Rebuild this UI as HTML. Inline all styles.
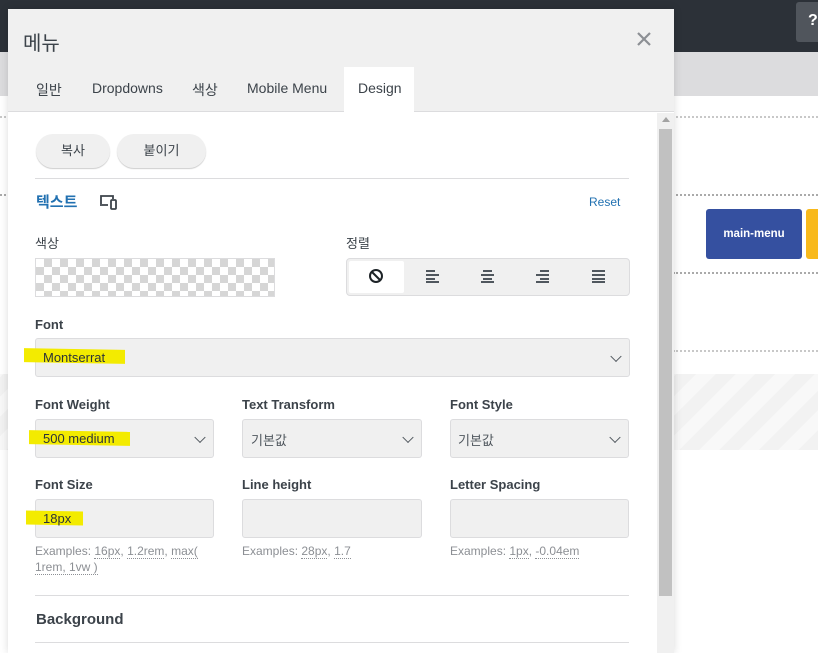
<!DOCTYPE html>
<html><head><meta charset="utf-8"><style>
*{box-sizing:border-box;margin:0;padding:0}
body{width:818px;height:653px;overflow:hidden;position:relative;background:#fff;font-family:"Liberation Sans","Noto Sans CJK KR",sans-serif;color:#3c434a;font-size:13px}
.a{position:absolute}
.dot{position:absolute;height:0;border-top:2px dotted #c8c8c8}
.lbl{position:absolute;font-size:13px;color:#3c434a;font-weight:600}
.sel{position:absolute;background:#f0f0f0;border:1px solid #dcdcde;border-radius:3px}
.chev{position:absolute;right:9px;top:50%;width:8px;height:8px;border-right:1.6px solid #50575e;border-bottom:1.6px solid #50575e;transform:translateY(-70%) rotate(45deg)}
.hl{position:absolute;background:#f3eb00;height:14px;transform:skewY(1deg)}
.ex{position:absolute;font-size:12px;color:#8c8f94;line-height:16px}
.ex u{text-decoration:none;border-bottom:1px dotted #8c8f94}
.hr{position:absolute;left:35px;width:594px;height:1px;background:#dcdcde}
</style></head><body>
<div class="a" style="left:0;top:0;width:818px;height:52px;background:#2c3138"></div>
<div class="a" style="left:0;top:52px;width:818px;height:44px;background:#dcdcde"></div>
<div class="a" style="left:796px;top:2px;width:30px;height:40px;background:#50555c;border-radius:3px;color:#fff;font-weight:bold;font-size:16px;padding:10px 0 0 12px">?</div>
<div class="dot" style="left:0;width:818px;top:116px"></div>
<div class="dot" style="left:0;width:818px;top:194px;border-color:#aaa"></div>
<div class="dot" style="left:673px;width:145px;top:272px;border-color:#aaa"></div>
<div class="dot" style="left:673px;width:145px;top:350px"></div>
<div class="a" style="left:0;top:374px;width:818px;height:76px;background:repeating-linear-gradient(-45deg,#f2f2f2 0 14px,#f8f8f8 14px 28px)"></div>
<div class="a" style="left:706px;top:209px;width:96px;height:50px;background:#3550a0;border-radius:3px;color:#fff;font-size:11.5px;font-weight:bold;text-align:center;line-height:50px">main-menu</div>
<div class="a" style="left:806px;top:209px;width:20px;height:50px;background:#f8b91b;border-radius:3px"></div>

<div class="a" style="left:8px;top:9px;width:666px;height:644px;background:#fff;box-shadow:0 0 8px rgba(0,0,0,.15)">
 <div class="a" style="left:0;top:0;width:666px;height:103px;background:#f0f0f0;border-bottom:1px solid #dcdcde"></div>
 <div class="a" style="left:15px;top:18px;font-size:20px;color:#3c434a">메뉴</div>
 <svg class="a" style="left:628px;top:22px" width="16" height="16" viewBox="0 0 16 16"><path d="M2 2l12 12M14 2L2 14" stroke="#8c8f94" stroke-width="2.2"/></svg>
 <div class="a" style="left:336px;top:58px;width:70px;height:46px;background:#fff"></div>
 <div class="a" style="top:71px;left:28px;font-size:14px;color:#3c434a">일반</div>
 <div class="a" style="top:71px;left:84px;font-size:14px;color:#3c434a">Dropdowns</div>
 <div class="a" style="top:71px;left:184px;font-size:14px;color:#3c434a">색상</div>
 <div class="a" style="top:71px;left:239px;font-size:14px;color:#3c434a">Mobile Menu</div>
 <div class="a" style="top:71px;left:350px;font-size:14px;color:#3c434a">Design</div>
 <div class="a" style="left:649px;top:104px;width:17px;height:540px;background:#f0f0f0"></div>
 <div class="a" style="left:654px;top:108px;width:0;height:0;border:4px solid transparent;border-bottom:5px solid #a3a3a3;border-top:0"></div>
 <div class="a" style="left:651px;top:120px;width:13px;height:467px;background:#c1c1c1"></div>
</div>

<div class="a" style="left:36px;top:134px;width:74px;height:34px;background:#f0f0f0;border-radius:17px;box-shadow:0 1px 1px #ccc;text-align:center;line-height:34px;font-size:13px">복사</div>
<div class="a" style="left:117px;top:134px;width:89px;height:34px;background:#f0f0f0;border-radius:17px;box-shadow:0 1px 1px #ccc;text-align:center;line-height:34px;font-size:13px">붙이기</div>
<div class="hr" style="top:178px"></div>
<div class="a" style="left:36px;top:191px;font-size:15px;color:#2271b1;font-weight:600">텍스트</div>
<svg class="a" style="left:99px;top:194px" width="20" height="16" viewBox="0 0 20 16"><path d="M2 10V2h12v3M1 11h8" stroke="#3c434a" stroke-width="1.8" fill="none"/><rect x="12" y="6" width="5" height="9" rx="1" stroke="#3c434a" stroke-width="1.8" fill="none"/></svg>
<div class="a" style="left:589px;top:195px;font-size:12px;color:#2271b1">Reset</div>

<div class="lbl" style="left:35px;top:233px;font-weight:400">색상</div>
<div class="a" style="left:35px;top:258px;width:240px;height:39px;border:1px solid #dcdcde;background-color:#fff;background-image:linear-gradient(45deg,#d6d6d6 25%,transparent 25%,transparent 75%,#d6d6d6 75%),linear-gradient(45deg,#d6d6d6 25%,transparent 25%,transparent 75%,#d6d6d6 75%);background-size:16px 16px;background-position:0 0,8px 8px"></div>
<div class="lbl" style="left:346px;top:233px;font-weight:400">정렬</div>
<div class="sel" style="left:346px;top:258px;width:284px;height:38px;border-radius:4px"></div>
<div class="a" style="left:349px;top:261px;width:55px;height:32px;background:#fff;border-radius:2px"></div>
<svg class="a" style="left:368px;top:268px" width="16" height="16" viewBox="0 0 16 16"><circle cx="8" cy="8" r="6" stroke="#1d2327" stroke-width="2" fill="none"/><path d="M4 4l8 8" stroke="#1d2327" stroke-width="2"/></svg>
<svg class="a" style="left:424px;top:269px" width="200" height="14" viewBox="0 0 200 14" fill="#50575e">
<rect x="2" y="1" width="9" height="2"/><rect x="2" y="5" width="13" height="2"/><rect x="2" y="9" width="9" height="2"/><rect x="2" y="12" width="13" height="2"/>
<rect x="59" y="1" width="9" height="2"/><rect x="57" y="5" width="13" height="2"/><rect x="59" y="9" width="9" height="2"/><rect x="57" y="12" width="13" height="2"/>
<rect x="116" y="1" width="9" height="2"/><rect x="112" y="5" width="13" height="2"/><rect x="116" y="9" width="9" height="2"/><rect x="112" y="12" width="13" height="2"/>
<rect x="168" y="1" width="13" height="2"/><rect x="168" y="5" width="13" height="2"/><rect x="168" y="9" width="13" height="2"/><rect x="168" y="12" width="13" height="2"/></svg>

<div class="lbl" style="left:35px;top:317px">Font</div>
<div class="sel" style="left:35px;top:338px;width:595px;height:39px"><div class="chev"></div></div>
<div class="hl" style="left:24px;top:349px;width:101px"></div>
<div class="a" style="left:43px;top:350px;font-size:13px;color:#2c3338">Montserrat</div>

<div class="lbl" style="left:35px;top:397px">Font Weight</div>
<div class="lbl" style="left:242px;top:397px">Text Transform</div>
<div class="lbl" style="left:450px;top:397px">Font Style</div>
<div class="sel" style="left:35px;top:419px;width:179px;height:39px"><div class="chev"></div></div>
<div class="sel" style="left:242px;top:419px;width:180px;height:39px"><div class="chev"></div></div>
<div class="sel" style="left:450px;top:419px;width:179px;height:39px"><div class="chev"></div></div>
<div class="hl" style="left:29px;top:431px;width:101px"></div>
<div class="a" style="left:43px;top:431px;font-size:13px;color:#2c3338">500 medium</div>
<div class="a" style="left:251px;top:430px;font-size:13px;color:#50575e">기본값</div>
<div class="a" style="left:458px;top:430px;font-size:13px;color:#50575e">기본값</div>

<div class="lbl" style="left:35px;top:477px">Font Size</div>
<div class="lbl" style="left:242px;top:477px">Line height</div>
<div class="lbl" style="left:450px;top:477px">Letter Spacing</div>
<div class="sel" style="left:35px;top:499px;width:179px;height:39px"></div>
<div class="sel" style="left:242px;top:499px;width:180px;height:39px"></div>
<div class="sel" style="left:450px;top:499px;width:179px;height:39px"></div>
<div class="hl" style="left:26px;top:511px;width:57px"></div>
<div class="a" style="left:43px;top:511px;font-size:13px;color:#2c3338">18px</div>
<div class="ex" style="left:35px;top:543px;width:175px">Examples: <u>16px</u>, <u>1.2rem</u>, <u>max(</u><br><u>1rem, 1vw )</u></div>
<div class="ex" style="left:242px;top:543px">Examples: <u>28px</u>, <u>1.7</u></div>
<div class="ex" style="left:450px;top:543px">Examples: <u>1px</u>, <u>-0.04em</u></div>
<div class="hr" style="top:595px"></div>
<div class="a" style="left:36px;top:611px;font-size:15px;font-weight:600;color:#3c434a">Background</div>
<div class="hr" style="top:642px"></div>
</body></html>
